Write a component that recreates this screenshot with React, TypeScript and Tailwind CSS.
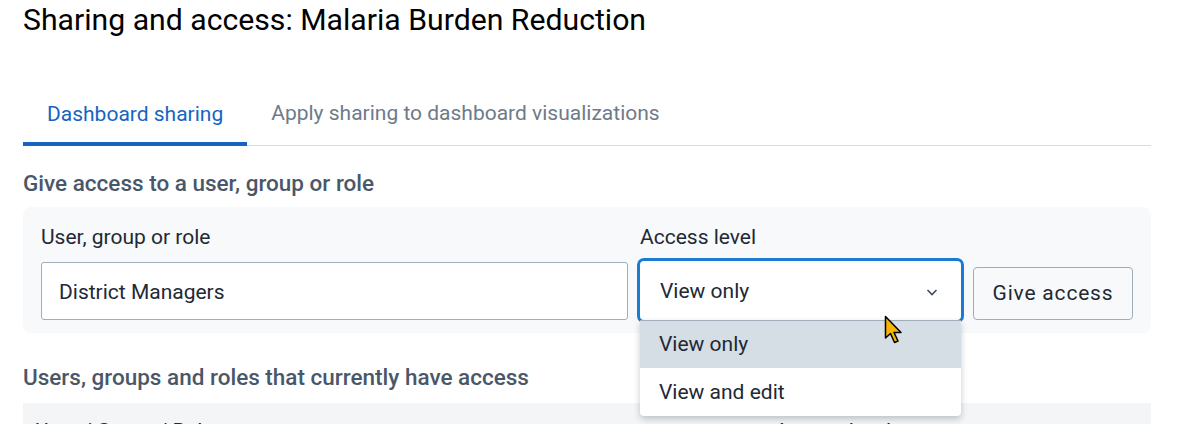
import { useState } from "react";

const options = ["View only", "View and edit"];

const Cursor = () => (
  <svg
    className="absolute left-[884px] top-[315px] z-20 pointer-events-none"
    width="22"
    height="30"
    viewBox="0 0 22 30">
    <path
      d="M1.5 1.5 L1.5 23 L6.5 18.5 L10.5 27.5 L14 26 L10 17.5 L17 17.5 Z"
      fill="#f7b500"
      stroke="#000"
      strokeWidth="1.5"
      strokeLinejoin="round"
    />
  </svg>
);

const App = () => {
  const [tab] = useState(0);
  const [level] = useState("View only");

  return (
    <div className="relative w-[1179px] h-[424px] overflow-hidden bg-white font-['Roboto',sans-serif] pl-[23px] pr-[28px]">
      <h1 className="mt-[2px] text-[30.2px] leading-[36px] text-black">
        Sharing and access: Malaria Burden Reduction
      </h1>

      <div className="mt-[44px] flex h-[64px] border-b border-[#d5dde5]">
        {["Dashboard sharing", "Apply sharing to dashboard visualizations"].map((t, i) => (
          <div
            key={t}
            className={
              i === tab
                ? "flex items-center px-[24px] pt-[5px] -mb-px border-b-[4px] border-[#1565c0] text-[21px] text-[#1565c0]"
                : "flex items-center px-[24px] pt-[5px] pb-[4px] text-[21px] text-[#6e7a8a]"
            }>
            {t}
          </div>
        ))}
      </div>

      <h2 className="mt-[24px] text-[22.5px] leading-[26px] font-medium text-[#4a5768]">
        Give access to a user, group or role
      </h2>

      <div className="mt-[11px] flex items-end gap-[12px] rounded-[8px] bg-[#f8f9fa] px-[18px] pt-[18px] pb-[13px]">
        <div className="flex w-[587px] flex-col gap-[13px]">
          <label className="text-[21px] leading-[24px] text-[#212934]">User, group or role</label>
          <div className="flex h-[58px] items-center rounded-[3px] border border-[#a0adba] bg-white px-[17px] pt-[4px] text-[21px] text-[#212934]">
            District Managers
          </div>
        </div>

        <div className="flex w-[321px] flex-col gap-[12px]">
          <label className="text-[21px] leading-[24px] text-[#212934]">Access level</label>
          <div className="relative">
            <div className="flex h-[59px] items-center justify-between rounded-[4px] bg-white pl-[20px] pr-[22px] pt-[2px] text-[21px] text-[#212934] ring-[3px] ring-[#1a7ad4]">
              <span>{level}</span>
              <svg width="14" height="14" viewBox="0 0 14 14">
                <path d="M2.5 5 L7 9.5 L11.5 5" fill="none" stroke="#404b5a" strokeWidth="1.6" />
              </svg>
            </div>
            <ul className="absolute left-0 right-0 top-[59px] z-10 rounded-b-[4px] border-t border-[#a0adba] bg-white shadow-[0_3px_6px_rgba(33,41,52,0.25)] overflow-hidden">
              {options.map((o) => (
                <li
                  key={o}
                  className={
                    o === level
                      ? "flex h-[47px] items-center bg-[#d5dde5] px-[19px] pt-[1px] text-[21px] text-[#212934]"
                      : "flex h-[48px] items-center px-[19px] pt-[1px] text-[21px] text-[#212934]"
                  }>
                  {o}
                </li>
              ))}
            </ul>
          </div>
        </div>

        <button className="flex h-[53px] w-[160px] items-center justify-center rounded-[4px] border border-[#a0adba] bg-[#f8f9fa] pt-[1px] text-[21px] tracking-[0.8px] text-[#212934]">
          Give access
        </button>
      </div>

      <h2 className="mt-[31px] text-[22.5px] leading-[26px] font-medium text-[#4a5768]">
        Users, groups and roles that currently have access
      </h2>

      <div className="mt-[13px] flex h-[48px] bg-[#f3f5f7] pt-[16px] text-[21px] leading-[24px] text-[#212934]">
        <div className="w-[752px] pl-[12px]">User / Group / Role</div>
        <div>Access level</div>
      </div>

      <Cursor />
    </div>
  );
};

export default App;
